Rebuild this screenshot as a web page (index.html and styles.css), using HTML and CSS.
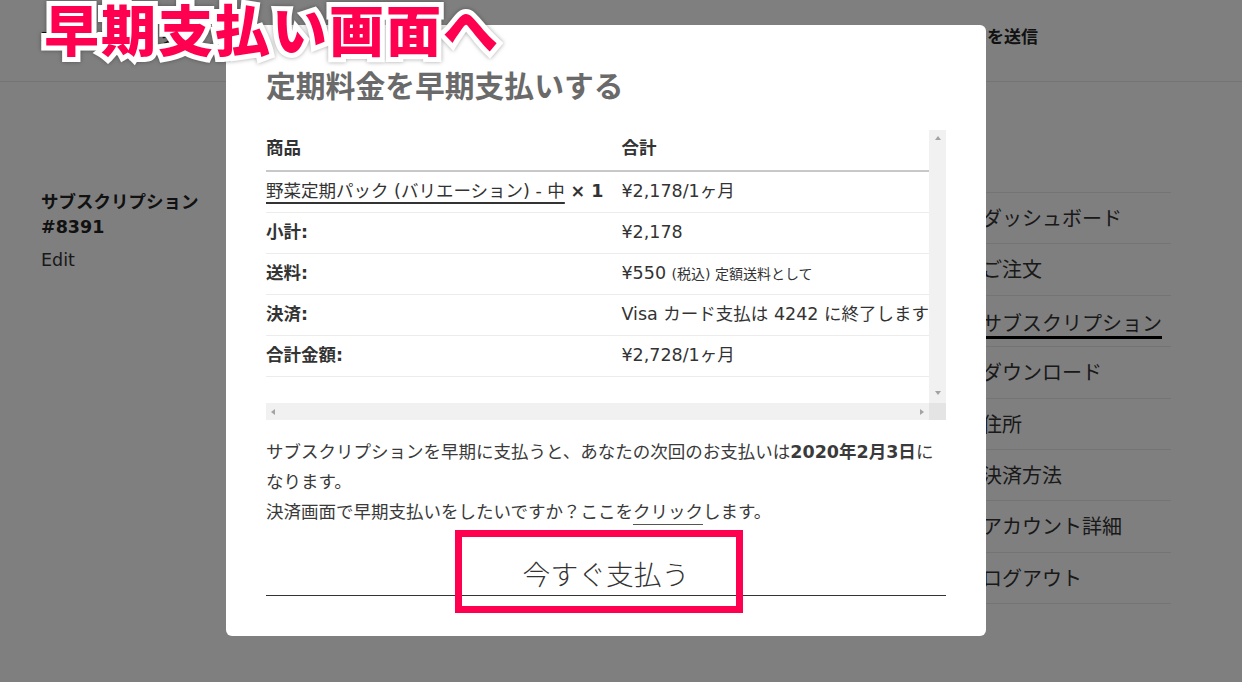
FILE: index.html
```html
<!DOCTYPE html>
<html lang="ja">
<head>
<meta charset="utf-8">
<title>定期料金を早期支払いする</title>
<link rel="stylesheet" href="styles.css">
</head>
<body>
<div class="page">
  <header class="site-header">
    <span class="brand">オンラインショップ</span>
    <span class="header-link">レビューを送信</span>
  </header>
  <main class="account">
    <section class="sub-summary">
      <h2 class="sub-title">サブスクリプション<br>#8391</h2>
      <a class="edit-link">Edit</a>
    </section>
    <nav class="account-nav">
      <ul>
        <li><a>ダッシュボード</a></li>
        <li><a>ご注文</a></li>
        <li><a class="active">サブスクリプション</a></li>
        <li><a>ダウンロード</a></li>
        <li><a>住所</a></li>
        <li><a>決済方法</a></li>
        <li><a>アカウント詳細</a></li>
        <li><a>ログアウト</a></li>
      </ul>
    </nav>
  </main>
</div>

<div class="overlay"></div>

<div class="modal">
  <h1 class="modal-title">定期料金を早期支払いする</h1>
  <div class="table-frame">
    <div class="table-view">
      <table class="order-table">
        <thead>
          <tr><th class="col-product">商品</th><th>合計</th></tr>
        </thead>
        <tbody>
          <tr><td class="col-product"><a class="product-link">野菜定期パック (バリエーション) - 中</a> <strong>× 1</strong></td><td>¥2,178/1ヶ月</td></tr>
          <tr><th>小計:</th><td>¥2,178</td></tr>
          <tr><th>送料:</th><td>¥550 <small>(税込) 定額送料として</small></td></tr>
          <tr><th>決済:</th><td>Visa カード支払は 4242 に終了します</td></tr>
          <tr><th>合計金額:</th><td>¥2,728/1ヶ月</td></tr>
        </tbody>
      </table>
    </div>
    <div class="vbar"><span class="arrow up"></span><span class="arrow down"></span></div>
    <div class="hbar"><span class="arrow left"></span><span class="arrow right"></span></div>
    <div class="corner"></div>
  </div>
  <p class="notice">サブスクリプションを早期に支払うと、あなたの次回のお支払いは<strong>2020年2月3日</strong>に<br>なります。<br>決済画面で早期支払いをしたいですか？ここを<a class="click-link">クリック</a>します。</p>
  <button class="pay-button">今すぐ支払う</button>
</div>

<div class="callout-title">早期支払い画面へ</div>
<div class="callout-box"></div>
</body>
</html>
```

FILE: styles.css
```css
html, body {
  margin: 0;
  padding: 0;
}

body {
  width: 1242px;
  height: 682px;
  overflow: hidden;
  background: #fff;
  font-family: "DejaVu Sans", "Noto Sans CJK JP", sans-serif;
  color: #333;
}

/* underlying page */
.site-header {
  height: 81px;
  border-bottom: 1px solid #e8e8e8;
  display: flex;
  align-items: center;
  justify-content: space-between;
  padding: 0 204px 0 40px;
  box-sizing: content-box;
  font-size: 17px;
  font-weight: bold;
  color: #222;
  font-family: "Noto Sans CJK JP", sans-serif;
}

.site-header span {
  line-height: 24px;
  margin-top: -10px;
}

.account {
  display: flex;
  padding: 108px 71px 0 41px;
}

.sub-summary {
  width: 180px;
}

.sub-title {
  margin: 0;
  font-size: 17.5px;
  line-height: 25px;
  font-weight: bold;
  color: #222;
}

.edit-link {
  display: block;
  margin-top: 8px;
  font-size: 17.5px;
  line-height: 25px;
  color: #333;
}

.account-nav {
  margin-left: auto;
  width: 189px;
  padding-top: 2px;
}

.account-nav ul {
  list-style: none;
  margin: 0;
  padding: 0;
  border-bottom: 1px solid #e8e8e8;
}

.account-nav li {
  border-top: 1px solid #e8e8e8;
  padding: 10px 0;
}

.account-nav a {
  display: inline-block;
  font-size: 20px;
  line-height: 30.4px;
  color: #333;
  font-family: "Noto Sans CJK JP", sans-serif;
}

.account-nav a.active {
  line-height: 27.4px;
  padding-top: 3px;
  border-bottom: 3px solid #000;
  margin-bottom: -3px;
}

/* overlay */
.overlay {
  position: fixed;
  inset: 0;
  background: rgba(0, 0, 0, 0.5);
}

/* modal */
.modal {
  position: fixed;
  left: 226px;
  top: 25px;
  width: 760px;
  height: 611px;
  box-sizing: border-box;
  padding: 38px 40px 40px;
  background: #fff;
  border-radius: 6px;
}

.modal-title {
  margin: 0;
  font-family: "Noto Sans CJK JP", sans-serif;
  font-size: 29.8px;
  line-height: 42px;
  font-weight: bold;
  color: #6a6a6a;
}

.table-frame {
  margin-top: 25px;
  height: 290px;
  display: grid;
  grid-template-columns: 1fr 17px;
  grid-template-rows: 1fr 17px;
}

.table-view {
  overflow: hidden;
}

.order-table {
  border-collapse: separate;
  border-spacing: 0;
  min-width: 100%;
  white-space: nowrap;
  font-size: 17.5px;
  color: #333;
}

.order-table th,
.order-table td {
  text-align: left;
  padding: 7px 0 9px;
  line-height: 24px;
  border-bottom: 1px solid #ececec;
  vertical-align: middle;
}

.order-table th {
  font-weight: bold;
}

.order-table thead th {
  padding: 6px 0 10px;
  border-bottom: 2px solid #c8c8c8;
}

.order-table .col-product {
  width: 356px;
}

.product-link {
  text-decoration: underline;
  text-decoration-thickness: 1.5px;
  text-underline-offset: 5px;
  text-decoration-color: #333;
}

.order-table small {
  font-size: 14px;
  line-height: 1;
}

.vbar {
  background: #f1f1f1;
  display: flex;
  flex-direction: column;
  justify-content: space-between;
  align-items: center;
  padding: 6px 0 8px;
}

.hbar {
  background: #f1f1f1;
  display: flex;
  justify-content: space-between;
  align-items: center;
  padding: 0 5px;
}

.corner {
  background: #e4e4e4;
}

.arrow {
  width: 0;
  height: 0;
  display: block;
}

.arrow.up {
  border-left: 3.5px solid transparent;
  border-right: 3.5px solid transparent;
  border-bottom: 4px solid #a3a3a3;
}

.arrow.down {
  border-left: 3.5px solid transparent;
  border-right: 3.5px solid transparent;
  border-top: 4px solid #a3a3a3;
}

.arrow.left {
  border-top: 3.5px solid transparent;
  border-bottom: 3.5px solid transparent;
  border-right: 4px solid #a3a3a3;
}

.arrow.right {
  border-top: 3.5px solid transparent;
  border-bottom: 3.5px solid transparent;
  border-left: 4px solid #a3a3a3;
}

.notice {
  margin: 17px 0 0;
  font-size: 17.5px;
  line-height: 30px;
  color: #3a3a3a;
}

.click-link {
  text-decoration: underline;
  text-decoration-thickness: 1px;
  text-underline-offset: 6px;
  text-decoration-color: #555;
}

.pay-button {
  display: block;
  width: 100%;
  margin-top: 17px;
  padding: 11px 0 4px;
  border: none;
  border-bottom: 1px solid #333;
  background: none;
  font-family: "Noto Sans CJK JP", sans-serif;
  font-size: 27.8px;
  line-height: 36px;
  font-weight: 300;
  color: #333;
  text-align: center;
}

/* annotations */
.callout-title {
  position: absolute;
  left: 44px;
  top: 0;
  font-family: "Noto Sans CJK JP", sans-serif;
  font-size: 55px;
  line-height: 55px;
  font-weight: 900;
  letter-spacing: 2px;
  color: #ff0050;
  -webkit-text-stroke: 10px #fff;
  paint-order: stroke fill;
  filter: drop-shadow(0 0 2px rgba(0, 0, 0, 0.35));
  white-space: nowrap;
}

.callout-box {
  position: absolute;
  left: 455px;
  top: 530px;
  width: 288px;
  height: 83px;
  box-sizing: border-box;
  border: 7px solid #ff0050;
}
```
